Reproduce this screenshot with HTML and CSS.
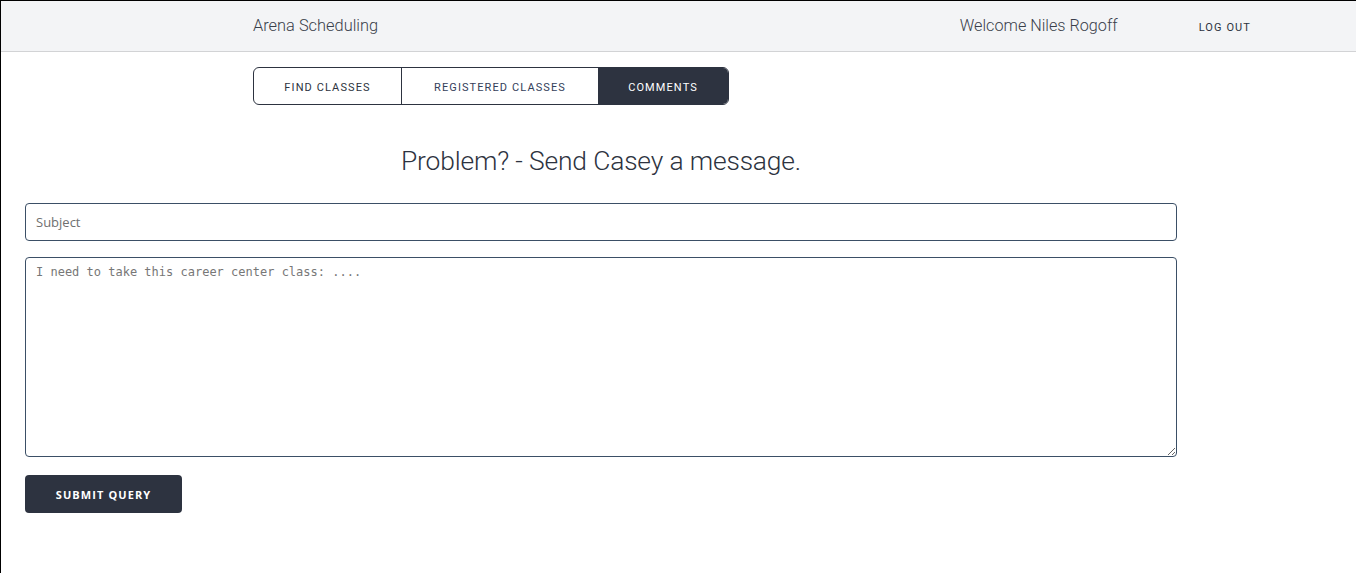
FILE: index.html
```html
<!DOCTYPE html>
<html>
<head>
<meta charset="utf-8">
<title>Arena Scheduling</title>
<link rel="stylesheet" href="styles.css">
</head>
<body>
<header class="topbar">
  <div class="brand">Arena Scheduling</div>
  <div class="spacer"></div>
  <div class="welcome">Welcome Niles Rogoff</div>
  <a class="logout" href="#">Log out</a>
</header>
<nav class="tabs-wrap">
  <div class="tabs">
    <a class="tab tab-find" href="#">Find Classes</a>
    <a class="tab tab-reg" href="#">Registered Classes</a>
    <a class="tab tab-active" href="#">Comments</a>
  </div>
</nav>
<main class="content">
  <h1 class="title">Problem? - Send Casey a message.</h1>
  <form class="form">
    <input class="field" type="text" placeholder="Subject">
    <textarea class="area" placeholder="I need to take this career center class: ...."></textarea>
    <button class="submit" type="button">Submit Query</button>
  </form>
</main>
</body>
</html>
```
FILE: styles.css
```css
html, body {
  margin: 0;
  padding: 0;
  background: #fff;
}
body {
  border-top: 1px solid #000;
  border-left: 1px solid #000;
  min-height: 573px;
  box-sizing: border-box;
  font-family: Roboto, "Liberation Sans", sans-serif;
  color: #2d3340;
}
.topbar {
  display: flex;
  align-items: center;
  height: 50px;
  background: #f3f4f6;
  border-bottom: 1px solid #d2d3d5;
  padding: 0 105px 0 252px;
}
.brand {
  font-size: 16.4px;
  font-weight: 300;
  color: #3a3f4b;
  margin-top: -2px;
}
.spacer { flex: 1; }
.welcome {
  font-size: 16.2px;
  font-weight: 300;
  color: #3a3f4b;
  margin-top: -2px;
}
.logout {
  margin-left: 81px;
  font-size: 11px;
  letter-spacing: 1.1px;
  text-transform: uppercase;
  text-decoration: none;
  color: #2d3340;
  margin-top: 2px;
}
.tabs-wrap {
  padding: 15px 0 0 252px;
}
.tabs {
  display: inline-flex;
  border: 1px solid #2d3340;
  border-radius: 6px;
  overflow: hidden;
  height: 36px;
}
.tab {
  display: flex;
  align-items: center;
  justify-content: center;
  padding-top: 2px;
  box-sizing: border-box;
  font-size: 11px;
  letter-spacing: 1.1px;
  text-transform: uppercase;
  text-decoration: none;
  color: #2d3340;
  font-weight: 400;
}
.tab-find { width: 148px; border-right: 1px solid #2d3340; }
.tab-reg { width: 196px; color: #34405a; }
.tab-active { width: 130px; background: #2d3340; color: #fff; }
.content {
  padding: 0 0 0 24px;
  width: 1152px;
}
.title {
  margin: 40px 0 0;
  text-align: center;
  font-size: 26.4px;
  font-weight: 300;
  line-height: 32px;
  color: #2d3340;
  letter-spacing: -0.15px;
}
.form {
  display: flex;
  flex-direction: column;
  margin-top: 26px;
}
.field {
  box-sizing: border-box;
  width: 1152px;
  height: 38px;
  border: 1px solid #3b4f66;
  border-radius: 4px;
  padding: 0 10px;
  font-family: "Open Sans", "Noto Sans", sans-serif;
  font-size: 13px;
  outline: none;
}
.field::placeholder { color: #6f6f6f; }
.area {
  box-sizing: border-box;
  width: 1152px;
  height: 200px;
  margin-top: 16px;
  border: 1px solid #3b4f66;
  border-radius: 4px;
  padding: 7px 10px;
  font-family: "DejaVu Sans Mono", monospace;
  font-size: 12px;
  resize: vertical;
  outline: none;
}
.area::placeholder { color: #777; }
.submit {
  align-self: flex-start;
  margin-top: 18px;
  width: 157px;
  height: 38px;
  border: none;
  border-radius: 4px;
  background: #2d3340;
  color: #fff;
  font-family: "Open Sans", "Noto Sans", sans-serif;
  font-weight: 700;
  font-size: 11px;
  letter-spacing: 1.1px;
  text-transform: uppercase;
}
```
